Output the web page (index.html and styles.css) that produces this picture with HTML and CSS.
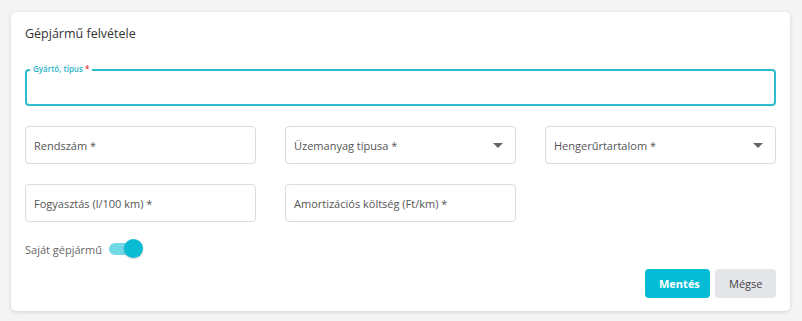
FILE: index.html
```html
<!DOCTYPE html>
<html lang="hu">
<head>
<meta charset="utf-8">
<title>Gépjármű felvétele</title>
<link rel="stylesheet" href="styles.css">
</head>
<body>
<div class="card">
  <h2 class="title">Gépjármű felvétele</h2>
  <div class="field focused">
    <span class="float-label">Gyártó, típus <span class="req">*</span></span>
  </div>
  <div class="grid">
    <div class="field"><span class="ph">Rendszám *</span></div>
    <div class="field select"><span class="ph">Üzemanyag típusa *</span><span class="arrow"></span></div>
    <div class="field select"><span class="ph">Hengerűrtartalom *</span><span class="arrow"></span></div>
    <div class="field"><span class="ph">Fogyasztás (l/100 km) *</span></div>
    <div class="field"><span class="ph">Amortizációs költség (Ft/km) *</span></div>
  </div>
  <div class="toggle-row">
    <span class="toggle-label">Saját gépjármű</span>
    <span class="switch"><span class="track"></span><span class="thumb"></span></span>
  </div>
  <div class="actions">
    <button class="btn primary">Mentés</button>
    <button class="btn secondary">Mégse</button>
  </div>
</div>
</body>
</html>
```
FILE: styles.css
```css
* { box-sizing: border-box; }
body {
  margin: 0;
  background: #f4f4f4;
  font-family: "Open Sans", "Liberation Sans", sans-serif;
  color: #333;
}
.card {
  margin: 12px 12px 10px 11px;
  width: 779px;
  height: 299px;
  background: #fff;
  border-radius: 5px;
  box-shadow: 0 1px 4px rgba(0,0,0,0.14);
  padding: 12px 14px 0 14px;
}
.title {
  margin: 0;
  font-size: 12.5px;
  font-weight: 500;
  line-height: 20px;
  color: #333;
  height: 45px;
}
.field {
  position: relative;
  height: 38px;
  border: 1px solid #dcdcdc;
  border-radius: 4px;
  display: flex;
  align-items: center;
  padding: 0 8px;
}
.field.focused {
  height: 37px;
  border: 2px solid #2cbccb;
  margin-bottom: 20px;
}
.float-label {
  position: absolute;
  left: 3px;
  top: -7px;
  padding: 0 3px;
  background: #fff;
  font-size: 8px;
  line-height: 10px;
  font-weight: 600;
  color: #1fb5c6;
}
.req { color: #e53935; }
.grid {
  display: grid;
  grid-template-columns: repeat(3, 231px);
  column-gap: 29px;
  row-gap: 20px;
}
.ph {
  font-size: 11px;
  color: #555;
  flex: 1;
}
.arrow {
  width: 0;
  height: 0;
  border-left: 5px solid transparent;
  border-right: 5px solid transparent;
  border-top: 5px solid #666;
  margin-right: 4px;
}
.toggle-row {
  display: flex;
  align-items: center;
  height: 20px;
  margin-top: 17px;
}
.toggle-label {
  font-size: 11px;
  color: #666;
  margin-right: 6px;
}
.switch {
  position: relative;
  width: 36px;
  height: 20px;
  display: inline-block;
}
.track {
  position: absolute;
  left: 1px;
  top: 4px;
  width: 32px;
  height: 12px;
  border-radius: 6px;
  background: #6fd9e6;
}
.thumb {
  position: absolute;
  left: 16px;
  top: 0;
  width: 19px;
  height: 19px;
  border-radius: 50%;
  background: #09bcd3;
  box-shadow: 0 1px 2px rgba(0,0,0,0.2);
}
.actions {
  display: flex;
  justify-content: flex-end;
  gap: 5px;
  margin-top: 10px;
}
.btn {
  font-family: inherit;
  height: 29px;
  border: none;
  border-radius: 4px;
  font-size: 11px;
  padding: 0 14px;
}
.primary {
  background: #05bcd6;
  color: #fff;
  font-weight: 700;
  width: 65px;
}
.secondary {
  background: #e4e6ea;
  color: #444;
  width: 61px;
}
```
